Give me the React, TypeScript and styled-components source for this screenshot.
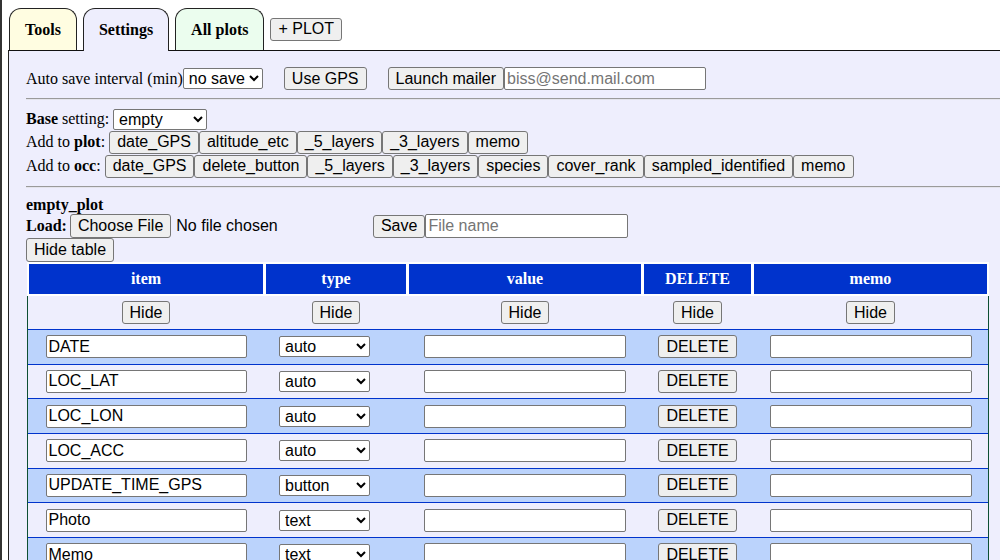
import React from "react";
import styled, { createGlobalStyle } from "styled-components";

const GlobalStyle = createGlobalStyle`
  html {
    border-left: 2px solid #333;
    overflow: hidden;
    background: #fff;
  }
  body {
    margin: 8px 0 0 6px;
    font-family: "Liberation Serif", "Times New Roman", serif;
    font-size: 16px;
    color: #000;
    overflow: hidden;
  }
`;

const SANS = `"Liberation Sans", Arial, sans-serif`;
const LAVENDER = "#eeeefd";
const ROW_BLUE = "#bbd3fc";
const HEAD_BLUE = "#0033cc";
const COLS = "234px 140px 232px 107px 233px";

const TabBar = styled.div`
  display: flex;
  align-items: center;
  gap: 6px;
  padding-left: 1px;
  height: 42px;
  position: relative;
  z-index: 1;
`;

const Tab = styled.div<{ $bg: string; $active?: boolean }>`
  box-sizing: border-box;
  align-self: flex-start;
  height: ${(p) => (p.$active ? "43px" : "42px")};
  padding: 0 15px;
  display: flex;
  align-items: center;
  justify-content: center;
  font-weight: bold;
  background: ${(p) => p.$bg};
  border: 1px solid #222;
  border-bottom: none;
  border-radius: 12px 12px 0 0;
`;

const Button = styled.button<{ $h?: number }>`
  font-family: ${SANS};
  font-size: 16px;
  line-height: 18px;
  color: #000;
  background: #efefef;
  border: 1px solid #767676;
  border-radius: 3px;
  padding: 1px 7px;
  margin: 0;
  height: ${(p) => p.$h ?? 23}px;
  white-space: nowrap;
`;

const Panel = styled.div`
  background: ${LAVENDER};
  border-top: 1px solid #111;
  border-left: 1px solid #222;
  padding: 16px 0 0 17px;
  min-height: 600px;
`;

const Row = styled.div<{ $h: number }>`
  display: flex;
  align-items: center;
  height: ${(p) => p.$h}px;
  white-space: nowrap;
`;

const Select = styled.select<{ $w: number }>`
  font-family: ${SANS};
  font-size: 16px;
  width: ${(p) => p.$w}px;
  height: 21px;
  box-sizing: border-box;
  border: 1px solid #767676;
  border-radius: 2px;
  background: #fff;
  color: #000;
  padding: 0 0 0 1px;
  margin: 0;
`;

const TextInput = styled.input<{ $w: number; $h?: number }>`
  font-family: ${SANS};
  font-size: 16px;
  width: ${(p) => p.$w}px;
  height: ${(p) => p.$h ?? 23}px;
  box-sizing: border-box;
  border: 1px solid #767676;
  border-radius: 2px;
  background: #fff;
  padding: 1px 2px;
  margin: 0;
  color: #000;
  &::placeholder {
    color: #757575;
  }
`;

const Gap = styled.span<{ $w: number }>`
  display: inline-block;
  width: ${(p) => p.$w}px;
`;

const Rule = styled.div`
  margin: 8px 0;
  border-top: 1px solid #9a9a9a;
  border-bottom: 1px solid #e4e4ec;
`;

const Title = styled.div`
  font-weight: bold;
  height: 18px;
  line-height: 18px;
`;

const FileInput = styled.input`
  font-family: ${SANS};
  font-size: 16px;
  width: 300px;
  margin: 0 0 0 3px;
  color: #000;
  &::file-selector-button {
    font-family: ${SANS};
    font-size: 16px;
    line-height: 18px;
    height: 24px;
    background: #efefef;
    border: 1px solid #767676;
    border-radius: 3px;
    padding: 1px 7px;
    margin: 0 5px 0 0;
    color: #000;
  }
`;

const Table = styled.div`
  width: 962px;
  margin-left: 1px;
`;

const HeadRow = styled.div`
  display: grid;
  grid-template-columns: ${COLS};
  column-gap: 3px;
  background: #fff;
  padding: 2px;
  box-sizing: border-box;
`;

const HeadCell = styled.div`
  background: ${HEAD_BLUE};
  color: #fff;
  font-weight: bold;
  height: 30px;
  display: flex;
  align-items: center;
  justify-content: center;
`;

const Body = styled.div`
  border-left: 1px solid #0d4f33;
  border-right: 1px solid #0d4f33;
`;

const BodyRow = styled.div<{ $bg: string; $h: number }>`
  display: grid;
  grid-template-columns: ${COLS};
  column-gap: 3px;
  padding: 0 1px;
  box-sizing: border-box;
  height: ${(p) => p.$h}px;
  background: ${(p) => p.$bg};
  border-bottom: 1px solid ${HEAD_BLUE};
`;

const Cell = styled.div<{ $start?: boolean }>`
  display: flex;
  align-items: center;
  justify-content: ${(p) => (p.$start ? "flex-start" : "center")};
  padding-left: ${(p) => (p.$start ? "13px" : "0")};
`;

const rows = [
  { item: "DATE", type: "auto" },
  { item: "LOC_LAT", type: "auto" },
  { item: "LOC_LON", type: "auto" },
  { item: "LOC_ACC", type: "auto" },
  { item: "UPDATE_TIME_GPS", type: "button" },
  { item: "Photo", type: "text" },
  { item: "Memo", type: "text" },
];

const typeOptions = ["auto", "button", "text", "number", "select", "check"];

export default function App() {
  return (
    <>
      <GlobalStyle />
      <TabBar>
        <Tab $bg="#fffde1">Tools</Tab>
        <Tab $bg={LAVENDER} $active>
          Settings
        </Tab>
        <Tab $bg="#ebfdee">All plots</Tab>
        <Button>+ PLOT</Button>
      </TabBar>
      <Panel>
        <Row $h={23}>
          Auto save interval (min)
          <Select $w={80} defaultValue="no save">
            <option>no save</option>
            <option>1</option>
            <option>5</option>
            <option>10</option>
          </Select>
          <Gap $w={21} />
          <Button>Use GPS</Button>
          <Gap $w={21} />
          <Button>Launch mailer</Button>
          <TextInput $w={202} placeholder="biss@send.mail.com" />
        </Row>
        <Rule />
        <Row $h={22}>
          <b>Base</b>&nbsp;setting:&nbsp;
          <Select $w={94} defaultValue="empty">
            <option>empty</option>
            <option>default</option>
          </Select>
        </Row>
        <Row $h={24}>
          Add to&nbsp;<b>plot</b>:&nbsp;
          <Button>date_GPS</Button>
          <Button>altitude_etc</Button>
          <Button>_5_layers</Button>
          <Button>_3_layers</Button>
          <Button>memo</Button>
        </Row>
        <Row $h={24}>
          Add to&nbsp;<b>occ</b>:&nbsp;
          <Button>date_GPS</Button>
          <Button>delete_button</Button>
          <Button>_5_layers</Button>
          <Button>_3_layers</Button>
          <Button>species</Button>
          <Button>cover_rank</Button>
          <Button>sampled_identified</Button>
          <Button>memo</Button>
        </Row>
        <Rule />
        <Title>empty_plot</Title>
        <Row $h={24}>
          <b>Load:</b>
          <FileInput type="file" />
          <Gap $w={3} />
          <Button>Save</Button>
          <TextInput $w={203} $h={24} placeholder="File name" />
        </Row>
        <Row $h={24}>
          <Button $h={24}>Hide table</Button>
        </Row>
        <Table>
          <HeadRow>
            <HeadCell>item</HeadCell>
            <HeadCell>type</HeadCell>
            <HeadCell>value</HeadCell>
            <HeadCell>DELETE</HeadCell>
            <HeadCell>memo</HeadCell>
          </HeadRow>
          <Body>
            <BodyRow $bg={LAVENDER} $h={34}>
              <Cell>
                <Button>Hide</Button>
              </Cell>
              <Cell>
                <Button>Hide</Button>
              </Cell>
              <Cell>
                <Button>Hide</Button>
              </Cell>
              <Cell>
                <Button>Hide</Button>
              </Cell>
              <Cell>
                <Button>Hide</Button>
              </Cell>
            </BodyRow>
            {rows.map((r, i) => (
              <BodyRow key={r.item} $bg={i % 2 === 0 ? ROW_BLUE : LAVENDER} $h={34.67}>
                <Cell>
                  <TextInput $w={201} defaultValue={r.item} />
                </Cell>
                <Cell $start>
                  <Select $w={91} defaultValue={r.type}>
                    {typeOptions.map((o) => (
                      <option key={o}>{o}</option>
                    ))}
                  </Select>
                </Cell>
                <Cell>
                  <TextInput $w={202} />
                </Cell>
                <Cell>
                  <Button>DELETE</Button>
                </Cell>
                <Cell>
                  <TextInput $w={202} />
                </Cell>
              </BodyRow>
            ))}
          </Body>
        </Table>
      </Panel>
    </>
  );
}
